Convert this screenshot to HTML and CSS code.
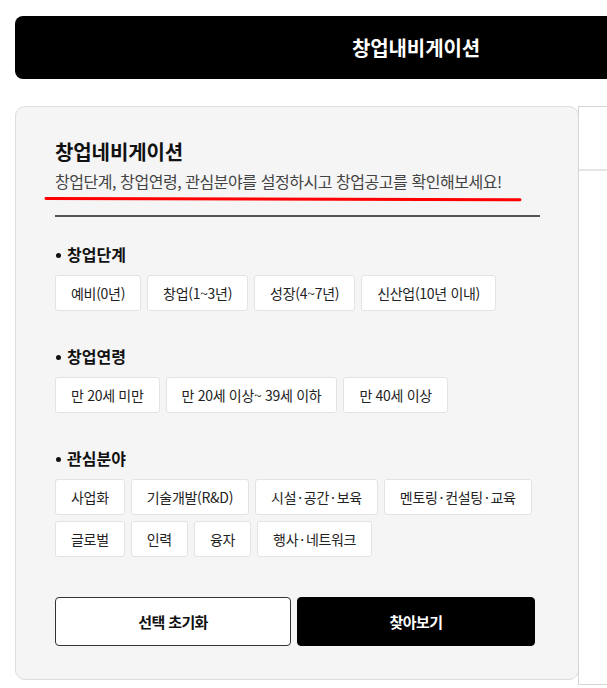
FILE: index.html
```html
<!doctype html>
<html lang="ko">
<head>
    <meta charset="utf-8">
    <title>창업내비게이션</title>
    <link rel="stylesheet" href="styles.css">
</head>
<body>
<div class="wrap">
    <div class="top-bar">
        <h1>창업내비게이션</h1>
    </div>

    <div class="content">
        <div class="navi">
            <h2 class="navi-title">창업네비게이션</h2>
            <p class="navi-desc">창업단계, 창업연령, 관심분야를 설정하시고 창업공고를 확인해보세요!</p>
            <svg class="marker" width="480" height="6" viewBox="0 0 480 6" xmlns="http://www.w3.org/2000/svg">
                <path d="M2 2.4 Q240 3.6 476 3.8" stroke="#ff0000" stroke-width="3" stroke-linecap="round" fill="none"></path>
            </svg>
            <div class="rule"></div>

            <div class="group group-first">
                <p class="group-title">창업단계</p>
                <div class="chips">
                    <button class="chip">예비(0년)</button>
                    <button class="chip">창업(1~3년)</button>
                    <button class="chip">성장(4~7년)</button>
                    <button class="chip">신산업(10년 이내)</button>
                </div>
            </div>

            <div class="group">
                <p class="group-title">창업연령</p>
                <div class="chips">
                    <button class="chip">만 20세 미만</button>
                    <button class="chip">만 20세 이상~ 39세 이하</button>
                    <button class="chip">만 40세 이상</button>
                </div>
            </div>

            <div class="group">
                <p class="group-title">관심분야</p>
                <div class="chips">
                    <button class="chip">사업화</button>
                    <button class="chip">기술개발(R&amp;D)</button>
                    <button class="chip">시설<span class="dot">·</span>공간<span class="dot">·</span>보육</button>
                    <button class="chip">멘토링<span class="dot">·</span>컨설팅<span class="dot">·</span>교육</button>
                    <button class="chip">글로벌</button>
                    <button class="chip">인력</button>
                    <button class="chip">융자</button>
                    <button class="chip">행사<span class="dot">·</span>네트워크</button>
                </div>
            </div>

            <div class="actions">
                <button class="btn btn-reset">선택 초기화</button>
                <button class="btn btn-search">찾아보기</button>
            </div>
        </div>

        <div class="side">
            <div class="side-head"></div>
        </div>
    </div>
</div>
</body>
</html>
```

FILE: styles.css
```css
html {
    overflow: hidden;
}

body {
    margin: 0;
    background-color: #ffffff;
    font-family: "Noto Sans CJK KR", "Noto Sans", sans-serif;
    color: #222;
}

.wrap {
    width: 802px;
    margin: 16px 0 0 15px;
}

.top-bar {
    height: 63px;
    background-color: #000;
    border-radius: 8px;
    display: flex;
    align-items: center;
    justify-content: center;
}

.top-bar h1 {
    margin: 0;
    color: #fff;
    font-size: 20px;
    font-weight: 700;
    letter-spacing: -0.1px;
}

.content {
    display: flex;
    align-items: flex-start;
    margin-top: 27px;
}

.navi {
    width: 564px;
    box-sizing: border-box;
    flex: none;
    background-color: #f5f5f5;
    border: 1px solid #dddddd;
    border-radius: 10px;
    padding: 31px 38px 33px 39px;
}

.navi-title {
    margin: 0;
    font-size: 20px;
    line-height: 28px;
    font-weight: 700;
    letter-spacing: -0.1px;
    color: #111;
}

.navi-desc {
    margin: 3px 0 0;
    font-size: 16px;
    line-height: 24px;
    letter-spacing: -0.45px;
    color: #444;
}

.marker {
    display: block;
    margin: 3px 0 0 -11px;
}

.rule {
    height: 2px;
    background-color: #555;
    margin-top: 13px;
}

.group {
    margin-top: 33px;
}

.group-first {
    margin-top: 25px;
}

.group-title {
    margin: 0;
    font-size: 16px;
    line-height: 24px;
    font-weight: 700;
    letter-spacing: 0;
    color: #111;
    display: flex;
    align-items: center;
}

.group-title::before {
    content: "";
    width: 5px;
    height: 5px;
    border-radius: 50%;
    background-color: #111;
    margin: 3px 6px 0 1px;
}

.chips {
    display: flex;
    flex-wrap: wrap;
    gap: 6px;
    margin-top: 9px;
}

.chip {
    height: 36px;
    padding: 0 15px;
    background-color: #fff;
    border: 1px solid #e3e3e3;
    border-radius: 3px;
    font-family: inherit;
    font-size: 14px;
    letter-spacing: -0.3px;
    color: #222;
    cursor: pointer;
}

.chip .dot {
    margin: 0 2px;
}

.actions {
    display: grid;
    grid-template-columns: 236px 238px;
    gap: 6px;
    margin-top: 40px;
}

.btn {
    height: 49px;
    border-radius: 4px;
    font-family: inherit;
    font-size: 15px;
    font-weight: 700;
    letter-spacing: -0.6px;
    cursor: pointer;
}

.btn-reset {
    background-color: #fff;
    border: 1px solid #333;
    color: #111;
}

.btn-search {
    background-color: #000;
    border: 1px solid #000;
    color: #fff;
}

.side {
    flex: none;
    width: 239px;
    height: 579px;
    box-sizing: border-box;
    margin-left: -1px;
    border: 1px solid #d5d5d5;
    border-right: none;
    background-color: #fff;
}

.side-head {
    height: 62px;
    border-bottom: 2px solid #e5e5e5;
}
```
